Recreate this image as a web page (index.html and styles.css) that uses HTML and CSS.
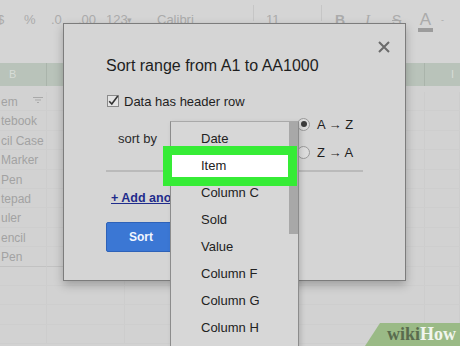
FILE: index.html
```html
<!DOCTYPE html>
<html>
<head>
<meta charset="utf-8">
<link rel="stylesheet" href="styles.css">
</head>
<body>
<div class="sheet">
  <div class="toolbar">
    <span>$</span>
    <span>%</span>
    <span>.0</span>
    <span>.00</span>
    <span>123</span>
    <span class="caret">▾</span>
    <span>Calibri</span>
    <span class="sep"></span>
    <span>11</span>
    <span class="sep"></span>
    <span class="bold">B</span>
    <span class="ital">I</span>
    <span class="strike">S</span>
    <span class="acol">A</span>
    <span class="caret">-</span>
  </div>
  <div class="formula"></div>
  <div class="colhead">
    <div class="hc">B</div>
    <div class="hc"></div>
    <div class="hc"></div>
    <div class="hc hc-last">I</div>
  </div>
  <div class="spacer"></div>
  <div class="rows">
    <div class="c first">em<svg class="filter" width="10" height="6" viewBox="0 0 10 6"><path d="M0 .5h10M2 3h6M4 5.5h2" stroke="#a9a9a9" stroke-width="1"/></svg></div><div class="c"></div><div class="c"></div><div class="c"></div>
    <div class="c first">tebook</div><div class="c"></div><div class="c"></div><div class="c"></div>
    <div class="c first">cil Case</div><div class="c"></div><div class="c"></div><div class="c"></div>
    <div class="c first">Marker</div><div class="c"></div><div class="c"></div><div class="c"></div>
    <div class="c first">Pen</div><div class="c"></div><div class="c"></div><div class="c"></div>
    <div class="c first">tepad</div><div class="c"></div><div class="c"></div><div class="c"></div>
    <div class="c first">uler</div><div class="c"></div><div class="c"></div><div class="c"></div>
    <div class="c first">encil</div><div class="c"></div><div class="c"></div><div class="c"></div>
    <div class="c first last">Pen</div><div class="c last"></div><div class="c"></div><div class="c"></div>
    <div class="c"></div><div class="c"></div><div class="c"></div><div class="c"></div>
    <div class="c"></div><div class="c"></div><div class="c"></div><div class="c"></div>
    <div class="c"></div><div class="c"></div><div class="c"></div><div class="c"></div>
    <div class="c"></div><div class="c"></div><div class="c"></div><div class="c"></div>
  </div>
</div>

<div class="dialog">
  <svg class="close" width="12" height="12" viewBox="0 0 12 12"><path d="M1 1L11 11M11 1L1 11" stroke="#6b6b6b" stroke-width="2"/></svg>
  <div class="title">Sort range from A1 to AA1000</div>
  <div class="check-row">
    <span class="checkbox"><svg width="12" height="12" viewBox="0 0 12 12"><path d="M2.2 6.2L4.8 9L10.8 1" fill="none" stroke="#333" stroke-width="1.6"/></svg></span>
    <span>Data has header row</span>
  </div>
  <div class="sort-row">
    <span class="sort-label">sort by</span>
    <span class="select-space"></span>
    <div class="radios">
      <div class="radio-item"><span class="radio on"></span><span>A → Z</span></div>
      <div class="radio-item"><span class="radio"></span><span>Z → A</span></div>
    </div>
  </div>
  <div class="divider"></div>
  <div class="add-link">+ Add another sort column</div>
  <div class="btn">Sort</div>
</div>

<div class="menu">
  <div class="scroll"></div>
  <div class="item">Date</div>
  <div class="item hl">Item</div>
  <div class="item">Column C</div>
  <div class="item">Sold</div>
  <div class="item">Value</div>
  <div class="item">Column F</div>
  <div class="item">Column G</div>
  <div class="item">Column H</div>
</div>

<div class="logo"><span class="wiki">wiki</span><span class="how">How</span></div>
</body>
</html>
```
FILE: styles.css
```css
* { box-sizing: border-box; }
html, body { margin: 0; padding: 0; }
body {
  width: 460px;
  height: 346px;
  overflow: hidden;
  position: relative;
  background: #d2d2d2;
  font-family: "Liberation Sans", Arial, sans-serif;
}

.sheet { display: flex; flex-direction: column; }

.toolbar {
  height: 40px;
  display: grid;
  grid-template-columns: 27px 27px 27px 28px 21px 30px 96px 13px 55px 14px 30px 27px 26px 23px 1fr;
  margin-left: -3px;
  padding-top: 12px;
  font-size: 13px;
  line-height: 16px;
  color: #ababab;
  background: #d5d5d5;
}
.toolbar .caret { font-size: 9px; }
.toolbar .sep { border-left: 1px solid #c6c6c6; height: 16px; margin-top: -7px; }
.toolbar .bold { font-weight: bold; font-size: 14px; }
.toolbar .ital { font-family: "Liberation Serif", serif; font-style: italic; font-size: 15px; }
.toolbar .strike { text-decoration: line-through; font-size: 14px; }
.toolbar .acol {
  font-size: 17px;
  line-height: 15px;
  width: 15px;
  text-align: center;
  border-bottom: 4px solid #9c9c9c;
  height: 20px;
}

.formula { height: 23px; background: #d5d5d5; }

.colhead {
  height: 23px;
  display: grid;
  grid-template-columns: 47px 78px 300px 1fr;
  background: #b9c3ba;
}
.hc {
  border-right: 1px solid #aab4ab;
  color: #d7dcd7;
  font-size: 11px;
  line-height: 23px;
  padding-left: 9px;
}
.hc-last { border-right: none; text-align: right; padding-right: 6px; }

.spacer { height: 6px; }

.rows {
  display: grid;
  grid-template-columns: 47px 78px 300px 1fr;
  grid-auto-rows: 19.4px;
}
.c {
  border-right: 1px solid #cdcdcd;
  border-bottom: 1px solid #cecece;
  font-size: 12px;
  line-height: 14px;
  padding-top: 3px;
  color: #a2a2a2;
  white-space: nowrap;
  position: relative;
}
.c.last { border-bottom-color: #c2c2c2; }
.c.first { padding-left: 1px; }
.filter { position: absolute; left: 33px; top: 5px; }

.dialog {
  position: absolute;
  left: 63px;
  top: 23px;
  width: 343px;
  height: 258px;
  background: #d5d5d5;
  border: 1px solid #7c7c7c;
  box-shadow: 0 4px 9px rgba(0, 0, 0, 0.25);
  padding-left: 42px;
  display: flex;
  flex-direction: column;
  align-items: flex-start;
  color: #1e1e1e;
}
.close { position: absolute; left: 314px; top: 17px; }
.title {
  margin-top: 32px;
  font-size: 16px;
  line-height: 20px;
  white-space: nowrap;
}
.check-row {
  margin-top: 17px;
  height: 16px;
  display: flex;
  align-items: center;
  gap: 5px;
  font-size: 13px;
  padding-left: 1px;
}
.checkbox {
  width: 12px;
  height: 12px;
  border: 1px solid #8a8a8a;
  background: #e4e4e4;
  display: flex;
  align-items: center;
  justify-content: center;
}
.checkbox svg { flex: none; }
.sort-row {
  margin-top: 1px;
  height: 56px;
  display: flex;
  align-items: center;
  font-size: 13px;
}
.sort-label { margin-left: 12px; width: 52px; color: #2a2a2a; }
.select-space { width: 127px; }
.radios { display: flex; flex-direction: column; }
.radio-item {
  height: 28px;
  display: flex;
  align-items: center;
  gap: 7px;
}
.radio {
  width: 13px;
  height: 13px;
  border-radius: 50%;
  border: 1px solid #9a9a9a;
  background: #dcdcdc;
  display: flex;
  align-items: center;
  justify-content: center;
}
.radio.on::after {
  content: "";
  width: 6px;
  height: 6px;
  border-radius: 50%;
  background: #3c3c3c;
}
.divider {
  margin-top: 4px;
  width: 257px;
  height: 2px;
  background: #bababa;
}
.add-link {
  margin-top: 18px;
  margin-left: 5px;
  font-size: 12.5px;
  line-height: 16px;
  font-weight: bold;
  color: #1f2c8c;
  text-decoration: underline;
  white-space: nowrap;
}
.btn {
  margin-top: 16px;
  width: 70px;
  height: 30px;
  background: #3b77d4;
  border: 1px solid #2e62b8;
  border-radius: 2px;
  color: #f2f6ff;
  font-size: 12px;
  font-weight: bold;
  text-align: center;
  line-height: 28px;
}

.menu {
  position: absolute;
  left: 170px;
  top: 121px;
  width: 129px;
  height: 240px;
  background: #d7d7d7;
  border-left: 1px solid #8c8c8c;
  border-right: 1px solid #8c8c8c;
  border-top: 1px solid #a9a9a9;
  box-shadow: 2px 2px 5px rgba(0, 0, 0, 0.15);
  padding-top: 3px;
  color: #222;
  font-size: 13px;
}
.scroll {
  position: absolute;
  right: 0;
  top: 0;
  width: 9px;
  height: 112px;
  background: #a8a8a8;
}
.item {
  height: 27px;
  line-height: 27px;
  padding-left: 30px;
  white-space: nowrap;
}
.item.hl {
  position: relative;
  z-index: 2;
  height: 22px;
  line-height: 22px;
  margin: 3px 10px 2px 1px;
  padding-left: 29px;
  background: #ffffff;
  outline: 9px solid #36ec36;
}

.logo {
  position: absolute;
  right: 0;
  bottom: 0;
  width: 95px;
  height: 23px;
  background: #9aba86;
  clip-path: polygon(15px 0, 100% 0, 100% 100%, 0 100%);
  padding-left: 22px;
  font-family: "Liberation Serif", "Times New Roman", serif;
  font-weight: bold;
  font-size: 18px;
  line-height: 23px;
  white-space: nowrap;
}
.wiki { color: #596b4e; }
.how { color: #f1f5ee; }
```
